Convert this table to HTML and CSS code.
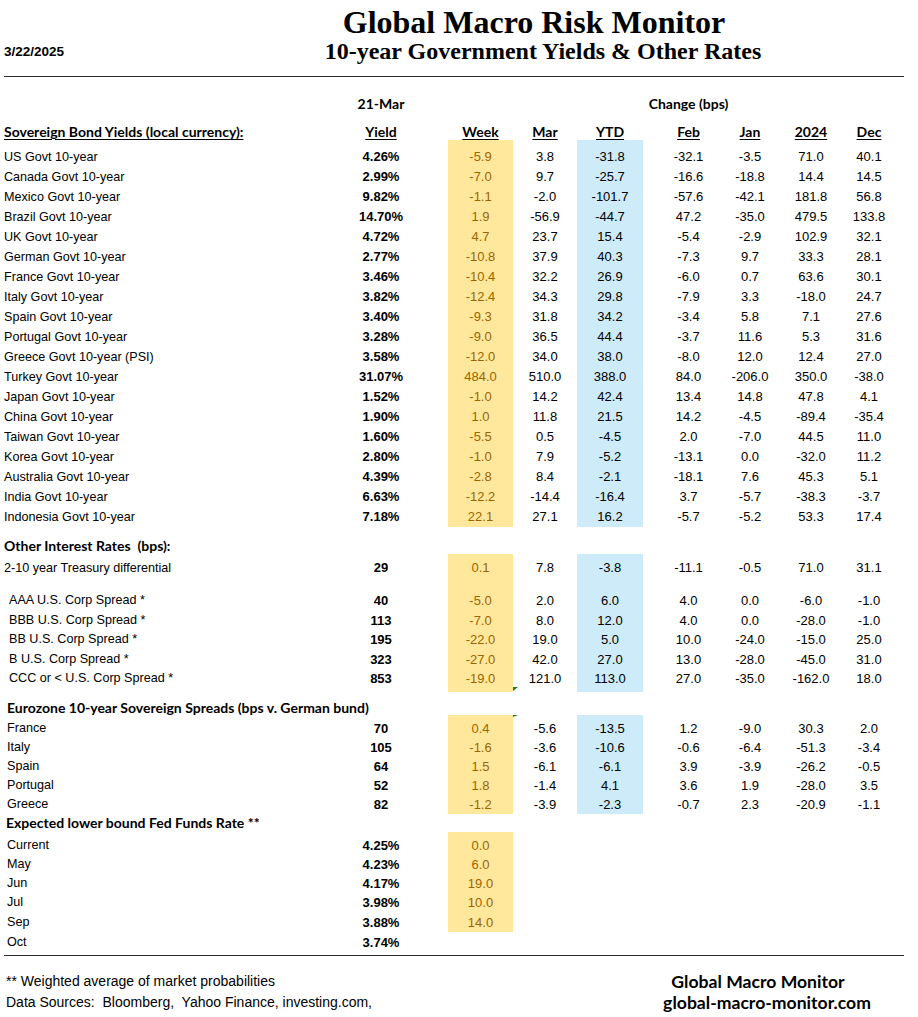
FILE: index.html
```html
<!DOCTYPE html>
<html lang="en">
<head>
<meta charset="utf-8">
<title>Global Macro Risk Monitor</title>
<link rel="stylesheet" href="styles.css">
</head>
<body>
<div class="page">
  <header class="top">
    <div class="date">3/22/2025</div>
    <div class="titles">
      <h1 class="title">Global Macro Risk Monitor</h1>
      <h2 class="subtitle">10-year Government Yields &amp; Other Rates</h2>
    </div>
  </header>
  <div class="rule"></div>

  <div class="table">
    <div class="row supra">
      <div class="c lab"></div><div class="c hd">21-Mar</div><div class="c"></div><div class="c"></div><div class="c"></div><div class="c"></div><div class="c"></div><div class="c hd change">Change (bps)</div><div class="c"></div><div class="c"></div><div class="c"></div>
    </div>
    <div class="row head">
      <div class="c lab sec u">Sovereign Bond Yields (local currency):</div><div class="c hd u">Yield</div><div class="c"></div><div class="c hd u">Week</div><div class="c hd u">Mar</div><div class="c hd u">YTD</div><div class="c"></div><div class="c hd u">Feb</div><div class="c hd u">Jan</div><div class="c hd u">2024</div><div class="c hd u">Dec</div>
    </div>
    <div class="row pad5"><div class="c"></div><div class="c"></div><div class="c"></div><div class="c wk"></div><div class="c"></div><div class="c yt"></div><div class="c"></div><div class="c"></div><div class="c"></div><div class="c"></div><div class="c"></div></div>
    <div class="row"><div class="c lab">US Govt 10-year</div><div class="c y">4.26%</div><div class="c"></div><div class="c wk">-5.9</div><div class="c">3.8</div><div class="c yt">-31.8</div><div class="c"></div><div class="c">-32.1</div><div class="c">-3.5</div><div class="c">71.0</div><div class="c">40.1</div></div>
    <div class="row"><div class="c lab">Canada Govt 10-year</div><div class="c y">2.99%</div><div class="c"></div><div class="c wk">-7.0</div><div class="c">9.7</div><div class="c yt">-25.7</div><div class="c"></div><div class="c">-16.6</div><div class="c">-18.8</div><div class="c">14.4</div><div class="c">14.5</div></div>
    <div class="row"><div class="c lab">Mexico Govt 10-year</div><div class="c y">9.82%</div><div class="c"></div><div class="c wk">-1.1</div><div class="c">-2.0</div><div class="c yt">-101.7</div><div class="c"></div><div class="c">-57.6</div><div class="c">-42.1</div><div class="c">181.8</div><div class="c">56.8</div></div>
    <div class="row"><div class="c lab">Brazil Govt 10-year</div><div class="c y">14.70%</div><div class="c"></div><div class="c wk">1.9</div><div class="c">-56.9</div><div class="c yt">-44.7</div><div class="c"></div><div class="c">47.2</div><div class="c">-35.0</div><div class="c">479.5</div><div class="c">133.8</div></div>
    <div class="row"><div class="c lab">UK Govt 10-year</div><div class="c y">4.72%</div><div class="c"></div><div class="c wk">4.7</div><div class="c">23.7</div><div class="c yt">15.4</div><div class="c"></div><div class="c">-5.4</div><div class="c">-2.9</div><div class="c">102.9</div><div class="c">32.1</div></div>
    <div class="row"><div class="c lab">German Govt 10-year</div><div class="c y">2.77%</div><div class="c"></div><div class="c wk">-10.8</div><div class="c">37.9</div><div class="c yt">40.3</div><div class="c"></div><div class="c">-7.3</div><div class="c">9.7</div><div class="c">33.3</div><div class="c">28.1</div></div>
    <div class="row"><div class="c lab">France Govt 10-year</div><div class="c y">3.46%</div><div class="c"></div><div class="c wk">-10.4</div><div class="c">32.2</div><div class="c yt">26.9</div><div class="c"></div><div class="c">-6.0</div><div class="c">0.7</div><div class="c">63.6</div><div class="c">30.1</div></div>
    <div class="row"><div class="c lab">Italy Govt 10-year</div><div class="c y">3.82%</div><div class="c"></div><div class="c wk">-12.4</div><div class="c">34.3</div><div class="c yt">29.8</div><div class="c"></div><div class="c">-7.9</div><div class="c">3.3</div><div class="c">-18.0</div><div class="c">24.7</div></div>
    <div class="row"><div class="c lab">Spain Govt 10-year</div><div class="c y">3.40%</div><div class="c"></div><div class="c wk">-9.3</div><div class="c">31.8</div><div class="c yt">34.2</div><div class="c"></div><div class="c">-3.4</div><div class="c">5.8</div><div class="c">7.1</div><div class="c">27.6</div></div>
    <div class="row"><div class="c lab">Portugal Govt 10-year</div><div class="c y">3.28%</div><div class="c"></div><div class="c wk">-9.0</div><div class="c">36.5</div><div class="c yt">44.4</div><div class="c"></div><div class="c">-3.7</div><div class="c">11.6</div><div class="c">5.3</div><div class="c">31.6</div></div>
    <div class="row"><div class="c lab">Greece Govt 10-year (PSI)</div><div class="c y">3.58%</div><div class="c"></div><div class="c wk">-12.0</div><div class="c">34.0</div><div class="c yt">38.0</div><div class="c"></div><div class="c">-8.0</div><div class="c">12.0</div><div class="c">12.4</div><div class="c">27.0</div></div>
    <div class="row"><div class="c lab">Turkey Govt 10-year</div><div class="c y">31.07%</div><div class="c"></div><div class="c wk">484.0</div><div class="c">510.0</div><div class="c yt">388.0</div><div class="c"></div><div class="c">84.0</div><div class="c">-206.0</div><div class="c">350.0</div><div class="c">-38.0</div></div>
    <div class="row"><div class="c lab">Japan Govt 10-year</div><div class="c y">1.52%</div><div class="c"></div><div class="c wk">-1.0</div><div class="c">14.2</div><div class="c yt">42.4</div><div class="c"></div><div class="c">13.4</div><div class="c">14.8</div><div class="c">47.8</div><div class="c">4.1</div></div>
    <div class="row"><div class="c lab">China Govt 10-year</div><div class="c y">1.90%</div><div class="c"></div><div class="c wk">1.0</div><div class="c">11.8</div><div class="c yt">21.5</div><div class="c"></div><div class="c">14.2</div><div class="c">-4.5</div><div class="c">-89.4</div><div class="c">-35.4</div></div>
    <div class="row"><div class="c lab">Taiwan Govt 10-year</div><div class="c y">1.60%</div><div class="c"></div><div class="c wk">-5.5</div><div class="c">0.5</div><div class="c yt">-4.5</div><div class="c"></div><div class="c">2.0</div><div class="c">-7.0</div><div class="c">44.5</div><div class="c">11.0</div></div>
    <div class="row"><div class="c lab">Korea Govt 10-year</div><div class="c y">2.80%</div><div class="c"></div><div class="c wk">-1.0</div><div class="c">7.9</div><div class="c yt">-5.2</div><div class="c"></div><div class="c">-13.1</div><div class="c">0.0</div><div class="c">-32.0</div><div class="c">11.2</div></div>
    <div class="row"><div class="c lab">Australia Govt 10-year</div><div class="c y">4.39%</div><div class="c"></div><div class="c wk">-2.8</div><div class="c">8.4</div><div class="c yt">-2.1</div><div class="c"></div><div class="c">-18.1</div><div class="c">7.6</div><div class="c">45.3</div><div class="c">5.1</div></div>
    <div class="row"><div class="c lab">India Govt 10-year</div><div class="c y">6.63%</div><div class="c"></div><div class="c wk">-12.2</div><div class="c">-14.4</div><div class="c yt">-16.4</div><div class="c"></div><div class="c">3.7</div><div class="c">-5.7</div><div class="c">-38.3</div><div class="c">-3.7</div></div>
    <div class="row"><div class="c lab">Indonesia Govt 10-year</div><div class="c y">7.18%</div><div class="c"></div><div class="c wk">22.1</div><div class="c">27.1</div><div class="c yt">16.2</div><div class="c"></div><div class="c">-5.7</div><div class="c">-5.2</div><div class="c">53.3</div><div class="c">17.4</div></div>

    <div class="row shead other"><div class="c lab sec">Other Interest Rates&nbsp; (bps):</div></div>
    <div class="row tall"><div class="c lab">2-10 year Treasury differential</div><div class="c y">29</div><div class="c"></div><div class="c wk">0.1</div><div class="c">7.8</div><div class="c yt">-3.8</div><div class="c"></div><div class="c">-11.1</div><div class="c">-0.5</div><div class="c">71.0</div><div class="c">31.1</div></div>
    <div class="row pad11"><div class="c"></div><div class="c"></div><div class="c"></div><div class="c wk"></div><div class="c"></div><div class="c yt"></div><div class="c"></div><div class="c"></div><div class="c"></div><div class="c"></div><div class="c"></div></div>
    <div class="row mid"><div class="c lab ind5">AAA U.S. Corp Spread *</div><div class="c y">40</div><div class="c"></div><div class="c wk">-5.0</div><div class="c">2.0</div><div class="c yt">6.0</div><div class="c"></div><div class="c">4.0</div><div class="c">0.0</div><div class="c">-6.0</div><div class="c">-1.0</div></div>
    <div class="row mid"><div class="c lab ind5">BBB U.S. Corp Spread *</div><div class="c y">113</div><div class="c"></div><div class="c wk">-7.0</div><div class="c">8.0</div><div class="c yt">12.0</div><div class="c"></div><div class="c">4.0</div><div class="c">0.0</div><div class="c">-28.0</div><div class="c">-1.0</div></div>
    <div class="row mid"><div class="c lab ind5">BB U.S. Corp Spread *</div><div class="c y">195</div><div class="c"></div><div class="c wk">-22.0</div><div class="c">19.0</div><div class="c yt">5.0</div><div class="c"></div><div class="c">10.0</div><div class="c">-24.0</div><div class="c">-15.0</div><div class="c">25.0</div></div>
    <div class="row mid"><div class="c lab ind5">B U.S. Corp Spread *</div><div class="c y">323</div><div class="c"></div><div class="c wk">-27.0</div><div class="c">42.0</div><div class="c yt">27.0</div><div class="c"></div><div class="c">13.0</div><div class="c">-28.0</div><div class="c">-45.0</div><div class="c">31.0</div></div>
    <div class="row mid"><div class="c lab ind5">CCC or &lt; U.S. Corp Spread *</div><div class="c y">853</div><div class="c"></div><div class="c wk">-19.0</div><div class="c">121.0</div><div class="c yt">113.0</div><div class="c"></div><div class="c">27.0</div><div class="c">-35.0</div><div class="c">-162.0</div><div class="c">18.0</div></div>
    <div class="row pad5"><div class="c"></div><div class="c"></div><div class="c"></div><div class="c wk"></div><div class="c flag-bot"></div><div class="c yt"></div><div class="c"></div><div class="c"></div><div class="c"></div><div class="c"></div><div class="c"></div></div>

    <div class="row shead euro"><div class="c lab sec ind3">Eurozone 10-year Sovereign Spreads (bps v. German bund)</div></div>
    <div class="row pad2"><div class="c"></div><div class="c"></div><div class="c"></div><div class="c wk"></div><div class="c flag-top"></div><div class="c yt"></div><div class="c"></div><div class="c"></div><div class="c"></div><div class="c"></div><div class="c"></div></div>
    <div class="row r19"><div class="c lab ind3">France</div><div class="c y">70</div><div class="c"></div><div class="c wk">0.4</div><div class="c">-5.6</div><div class="c yt">-13.5</div><div class="c"></div><div class="c">1.2</div><div class="c">-9.0</div><div class="c">30.3</div><div class="c">2.0</div></div>
    <div class="row r19"><div class="c lab ind3">Italy</div><div class="c y">105</div><div class="c"></div><div class="c wk">-1.6</div><div class="c">-3.6</div><div class="c yt">-10.6</div><div class="c"></div><div class="c">-0.6</div><div class="c">-6.4</div><div class="c">-51.3</div><div class="c">-3.4</div></div>
    <div class="row r19"><div class="c lab ind3">Spain</div><div class="c y">64</div><div class="c"></div><div class="c wk">1.5</div><div class="c">-6.1</div><div class="c yt">-6.1</div><div class="c"></div><div class="c">3.9</div><div class="c">-3.9</div><div class="c">-26.2</div><div class="c">-0.5</div></div>
    <div class="row r19"><div class="c lab ind3">Portugal</div><div class="c y">52</div><div class="c"></div><div class="c wk">1.8</div><div class="c">-1.4</div><div class="c yt">4.1</div><div class="c"></div><div class="c">3.6</div><div class="c">1.9</div><div class="c">-28.0</div><div class="c">3.5</div></div>
    <div class="row r19"><div class="c lab ind3">Greece</div><div class="c y">82</div><div class="c"></div><div class="c wk">-1.2</div><div class="c">-3.9</div><div class="c yt">-2.3</div><div class="c"></div><div class="c">-0.7</div><div class="c">2.3</div><div class="c">-20.9</div><div class="c">-1.1</div></div>
    <div class="row pad2"><div class="c"></div><div class="c"></div><div class="c"></div><div class="c wk"></div><div class="c"></div><div class="c yt"></div><div class="c"></div><div class="c"></div><div class="c"></div><div class="c"></div><div class="c"></div></div>

    <div class="row shead fed"><div class="c lab sec ind2">Expected lower bound Fed Funds Rate **</div></div>
    <div class="row pad2"><div class="c"></div><div class="c"></div><div class="c"></div><div class="c wk"></div></div>
    <div class="row rfed"><div class="c lab ind3">Current</div><div class="c y">4.25%</div><div class="c"></div><div class="c wk">0.0</div></div>
    <div class="row rfed"><div class="c lab ind3">May</div><div class="c y">4.23%</div><div class="c"></div><div class="c wk">6.0</div></div>
    <div class="row rfed"><div class="c lab ind3">Jun</div><div class="c y">4.17%</div><div class="c"></div><div class="c wk">19.0</div></div>
    <div class="row rfed"><div class="c lab ind3">Jul</div><div class="c y">3.98%</div><div class="c"></div><div class="c wk">10.0</div></div>
    <div class="row rfed"><div class="c lab ind3">Sep</div><div class="c y">3.88%</div><div class="c"></div><div class="c wk">14.0</div></div>
    <div class="row pad1"><div class="c"></div><div class="c"></div><div class="c"></div><div class="c wk"></div></div>
    <div class="row r19"><div class="c lab ind3">Oct</div><div class="c y">3.74%</div><div class="c"></div><div class="c"></div></div>
  </div>

  <div class="rule rule-bottom"></div>

  <footer class="foot">
    <div class="notes">
      <div class="note">** Weighted average of market probabilities</div>
      <div class="note">Data Sources:&nbsp; Bloomberg,&nbsp; Yahoo Finance, investing.com,</div>
    </div>
    <div class="brand">
      <div class="brand-name">Global Macro Monitor</div>
      <div class="brand-url">global-macro-monitor.com</div>
    </div>
  </footer>
</div>
</body>
</html>
```

FILE: styles.css
```css
* { box-sizing: border-box; }

html, body {
  margin: 0;
  padding: 0;
  background: #ffffff;
}

body {
  font-family: "Liberation Sans", Arial, sans-serif;
  color: #000;
  font-size: 13px;
}

.page {
  width: 918px;
}

/* ---------- header ---------- */
.top {
  display: grid;
  grid-template-columns: 316px 450px;
  height: 76px;
}

.date {
  font-weight: 700;
  font-size: 13.5px;
  padding-left: 4px;
  align-self: start;
  margin-top: 45px;
  line-height: 14px;
}

.titles {
  text-align: center;
  padding-top: 5px;
}

.title {
  margin: 0;
  font-family: "Liberation Serif", "Times New Roman", serif;
  font-weight: 700;
  font-size: 32px;
  line-height: 34px;
  padding-right: 14px;
}

.subtitle {
  margin: 0;
  font-family: "Liberation Serif", "Times New Roman", serif;
  font-weight: 700;
  font-size: 24px;
  line-height: 24px;
  padding-left: 4px;
}

.rule {
  margin-left: 4px;
  width: 900px;
  height: 1px;
  background: #2a2a2a;
}

/* ---------- table ---------- */
.table {
  display: flex;
  flex-direction: column;
}

.row {
  display: grid;
  grid-template-columns: 346px 70px 32px 65px 64px 66px 12px 67px 56px 66px 50px;
  height: 20px;
  line-height: 20px;
}

.c {
  text-align: center;
  white-space: nowrap;
  padding-top: 2px;
}

.lab {
  text-align: left;
  padding-left: 4px;
  font-size: 12.6px;
}

.ind2 { padding-left: 6px; }
.ind3 { padding-left: 7px; }
.ind5 { padding-left: 9px; }

.y { font-weight: 700; }

.wk {
  background: #ffe89c;
  color: #9c6500;
}

.yt {
  background: #cdebf9;
}

.hd, .sec {
  font-family: Lato, "Liberation Sans", sans-serif;
  font-weight: 700;
  font-size: 14px;
}

.u {
  text-decoration: underline;
  text-decoration-thickness: 1px;
  text-underline-offset: 2px;
}

.change {
  justify-self: center;
}

.supra { margin-top: 15px; }
.head { margin-top: 8px; }

.pad5 { height: 5px; }
.pad11 { height: 11px; }
.pad2 { height: 2px; }
.pad1 { height: 1.5px; }

.shead .lab { grid-column: 1 / -1; }
.other { margin-top: 9px; }
.tall { height: 24px; line-height: 24px; }
.mid { height: 19.5px; line-height: 19.5px; }
.euro { margin-top: 4px; height: 19px; line-height: 19px; }
.r19 { height: 19px; line-height: 19px; }
.fed { height: 18px; line-height: 18px; }
.fed .c { padding-top: 0; }
.rfed { height: 19.3px; line-height: 19.3px; }

.flag-bot, .flag-top { position: relative; }
.flag-bot::before, .flag-top::before {
  content: "";
  position: absolute;
  left: 0;
  top: 0;
  width: 0;
  height: 0;
  border-top: 4px solid #1e7b1e;
  border-right: 5px solid transparent;
}
.flag-top::before {
  border-top-width: 2px;
}

.rule-bottom { margin-top: 5px; }

/* ---------- footer ---------- */
.foot {
  display: grid;
  grid-template-columns: 650px 234px;
  padding-top: 15px;
}

.notes {
  padding-left: 6px;
  font-size: 14px;
}

.note {
  height: 21px;
  line-height: 21px;
}

.brand {
  text-align: center;
  font-family: Lato, "Liberation Sans", sans-serif;
  font-weight: 700;
  font-size: 17.6px;
}

.brand-name {
  height: 21px;
  line-height: 21px;
  padding-right: 18px;
}

.brand-url {
  height: 21px;
  line-height: 21px;
}
```
